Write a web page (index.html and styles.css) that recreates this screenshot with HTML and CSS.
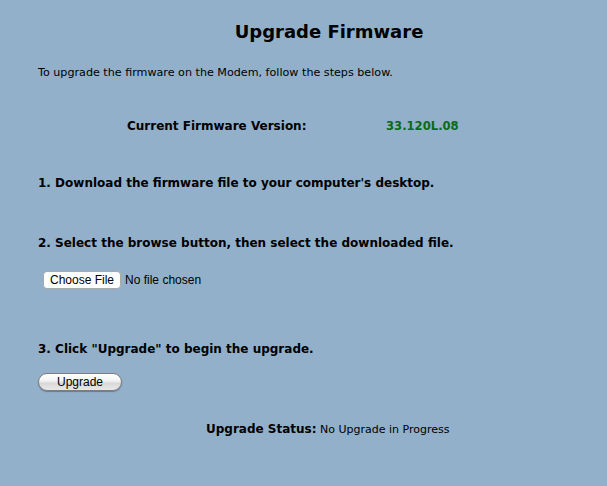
FILE: index.html
```html
<!DOCTYPE html>
<html>
<head>
<meta charset="utf-8">
<link rel="stylesheet" href="styles.css">
</head>
<body>
<div class="page">
  <h1 class="title">Upgrade Firmware</h1>
  <p class="intro">To upgrade the firmware on the Modem, follow the steps below.</p>
  <div class="version">
    <span class="version-label">Current Firmware Version:</span>
    <span class="version-value">33.120L.08</span>
  </div>
  <div class="step step1">1. Download the firmware file to your computer's desktop.</div>
  <div class="step step2">2. Select the browse button, then select the downloaded file.</div>
  <div class="file-row">
    <button class="choose-btn">Choose File</button>
    <span class="file-none">No file chosen</span>
  </div>
  <div class="step step3">3. Click "Upgrade" to begin the upgrade.</div>
  <div class="upgrade-row"><button class="upgrade-btn">Upgrade</button></div>
  <div class="status"><b>Upgrade Status:</b> No Upgrade in Progress</div>
</div>
</body>
</html>
```

FILE: styles.css
```css
html, body {
  margin: 0;
  padding: 0;
  background: #92b0ca;
}
body {
  font-family: "DejaVu Sans", Verdana, sans-serif;
  color: #000;
  width: 607px;
  height: 486px;
  overflow: hidden;
}
.page {
  padding: 20px 0 0 38px;
  display: flex;
  flex-direction: column;
}
.title {
  margin: 0;
  font-size: 18px;
  font-weight: bold;
  text-align: center;
  width: 582px;
  line-height: 24px;
}
.intro {
  margin: 22px 0 0 0;
  font-size: 11.15px;
  line-height: 14px;
}
.version {
  display: flex;
  margin: 38px 0 0 89px;
  font-size: 12px;
  font-weight: bold;
  line-height: 16px;
}
.version-label { width: 259px; }
.version-value { color: #0b6a14; font-size: 11.6px; }
.step {
  font-size: 12px;
  font-weight: bold;
  line-height: 16px;
}
.step1 { margin-top: 41px; }
.step2 { margin-top: 44px; }
.file-row {
  display: flex;
  align-items: center;
  margin: 20px 0 0 5px;
  gap: 4px;
}
.choose-btn {
  font-family: "Liberation Sans", Arial, sans-serif;
  font-size: 12px;
  height: 18px;
  padding: 0 6px;
  background: #fff;
  border: 1px solid #a9a9a9;
  border-radius: 4px;
  color: #000;
}
.file-none {
  font-family: "Liberation Sans", Arial, sans-serif;
  font-size: 12px;
  color: #000;
}
.step3 { margin-top: 52px; }
.upgrade-row { margin-top: 14px; }
.upgrade-btn {
  font-family: "Liberation Sans", Arial, sans-serif;
  font-size: 12px;
  width: 84px;
  height: 18px;
  padding: 0;
  border: 1px solid #7d7d7d;
  border-radius: 9px;
  background: linear-gradient(#ffffff 0%, #f4f4f4 40%, #d8d8d8 60%, #e8e8e8 100%);
  color: #000;
  box-shadow: 0 1px 1px rgba(0,0,0,0.3);
}
.status {
  margin: 31px 0 0 168px;
  font-size: 11px;
  line-height: 14px;
}
.status b { font-size: 12px; }
```
